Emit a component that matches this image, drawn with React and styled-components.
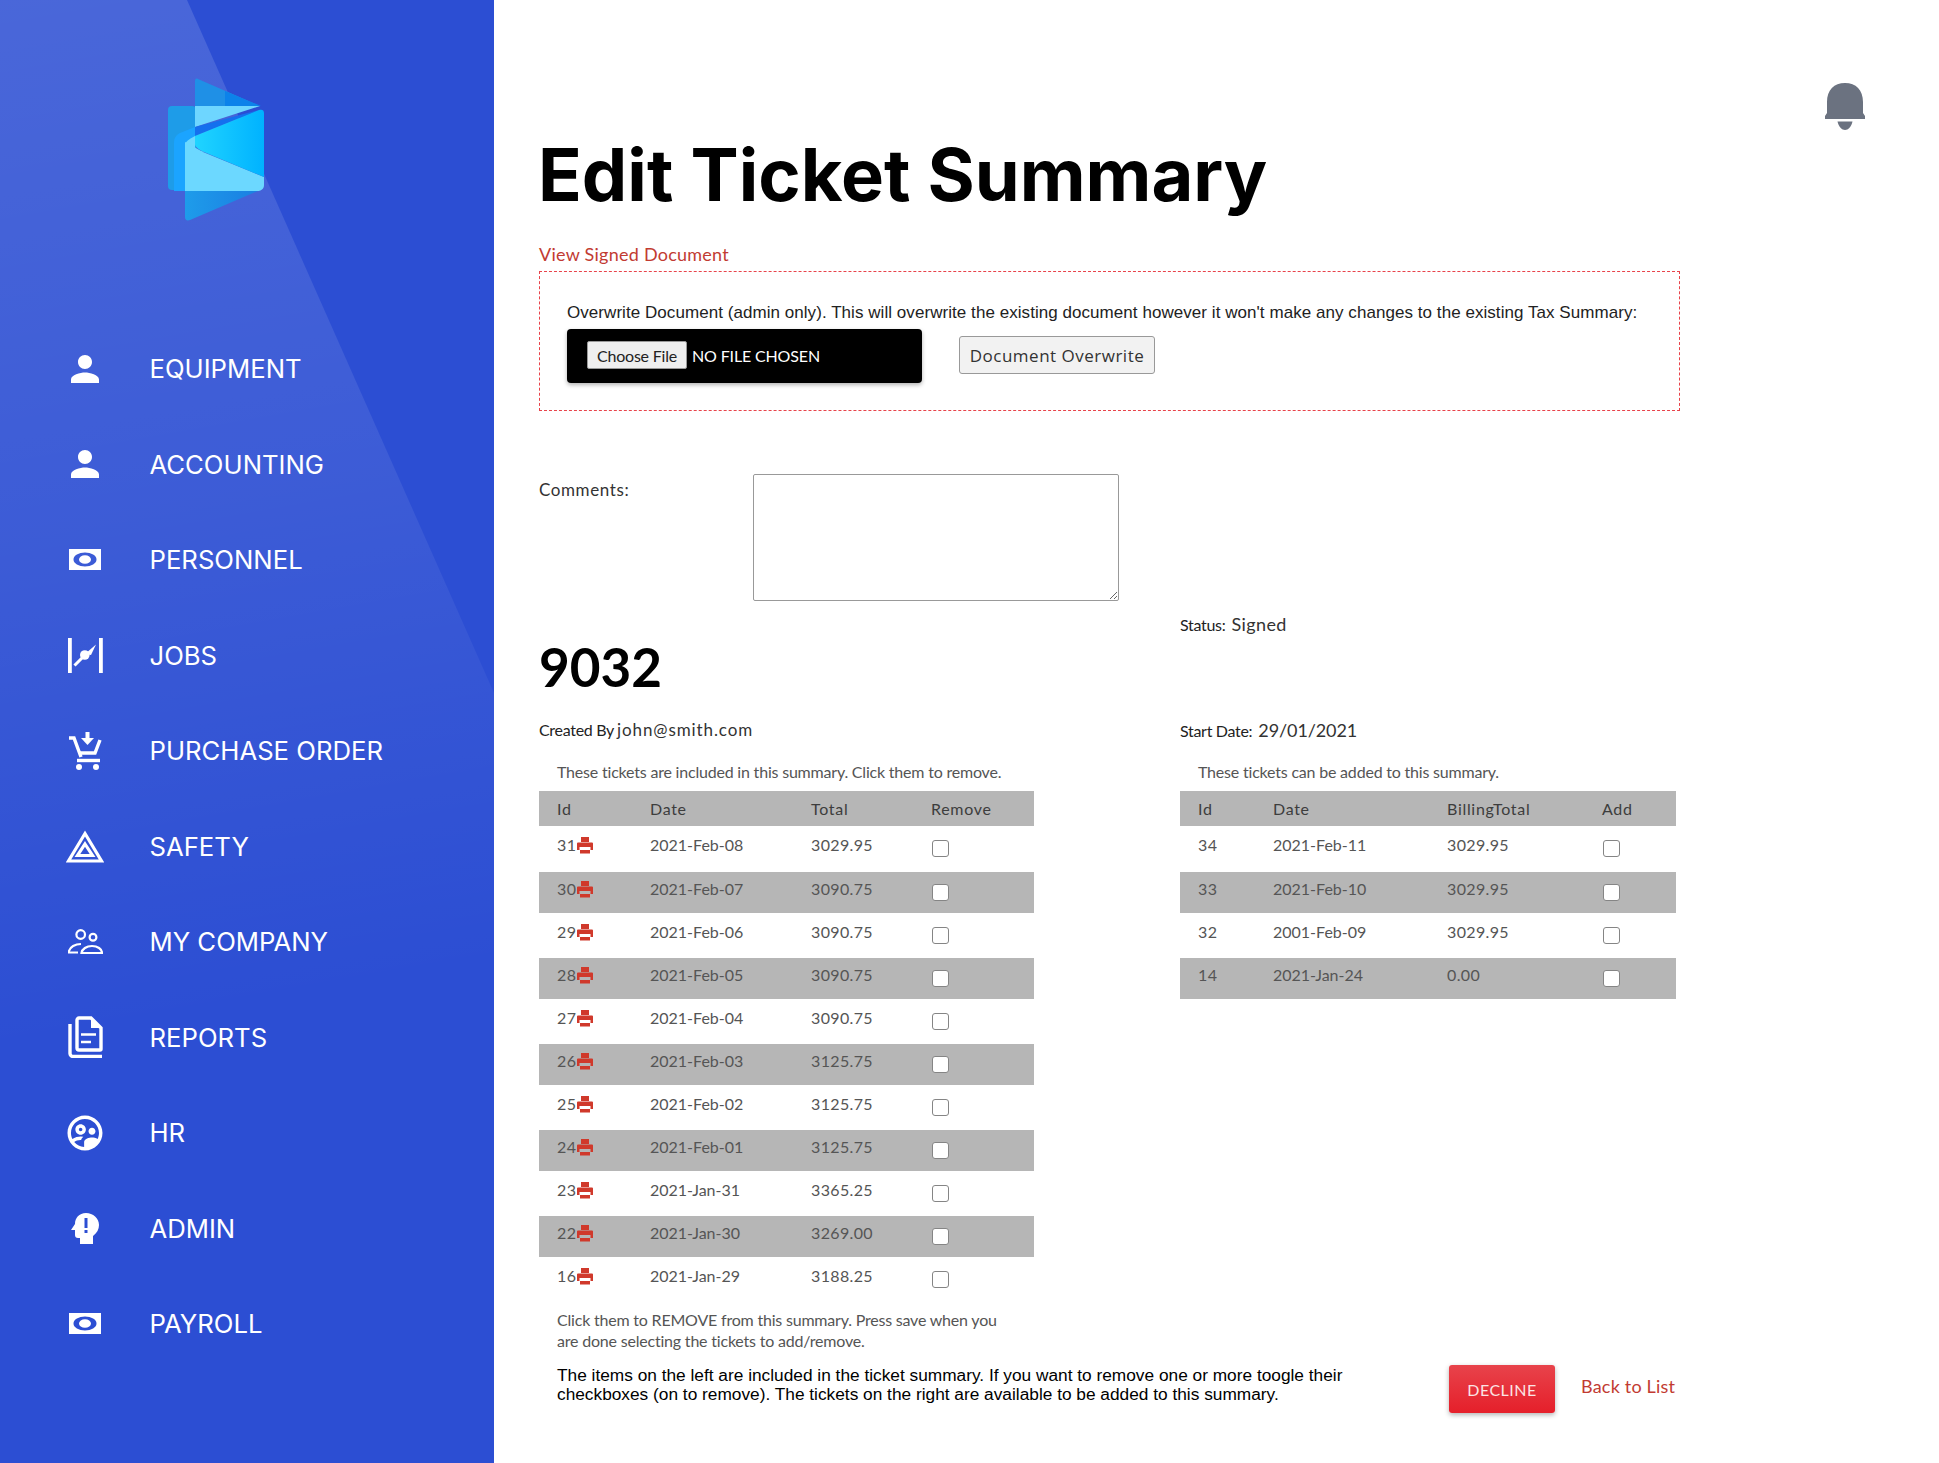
import React from "react";
import styled, { createGlobalStyle } from "styled-components";
import { MdPerson, MdOutlineSupervisedUserCircle } from "react-icons/md";

const MoneyIcon = () => (
  <svg width="32" height="21" viewBox="0 0 32 21" fill="currentColor">
    <path
      fillRule="evenodd"
      d="M0 0h32v21H0z M4.500 10.500a11.500 7 0 1 0 23 0a11.500 7 0 1 0-23 0z M10 10.500a6 4.300 0 1 0 12 0a6 4.300 0 1 0-12 0z"
    />
  </svg>
);

const JobsIcon = () => (
  <svg width="35" height="35" viewBox="0 0 35 35" fill="currentColor">
    <rect x="0" y="0" width="3.800" height="35" />
    <rect x="31" y="0" width="3.800" height="35" />
    <path d="M6.500 27.500L16 18" stroke="currentColor" strokeWidth="3" />
    <path d="M17 16L28 6.500 23 17z" />
    <circle cx="16.800" cy="17" r="4.800" />
  </svg>
);

const CartIcon = () => (
  <svg width="34" height="38" viewBox="0 0 34 38" fill="none" stroke="currentColor" strokeWidth="3.400">
    <path d="M1 6h5l7 19" />
    <path d="M32 8l-5 13H11" />
    <path d="M9 28.500h23" />
    <path d="M19.500 0v6" strokeWidth="4" />
    <path d="M13 6h13l-6.500 7z" fill="currentColor" stroke="none" />
    <circle cx="11" cy="35" r="3" fill="currentColor" stroke="none" />
    <circle cx="28" cy="35" r="3" fill="currentColor" stroke="none" />
  </svg>
);

const SafetyIcon = () => (
  <svg width="38" height="33" viewBox="0 0 38 33" fill="none" stroke="currentColor" strokeWidth="3.200">
    <path d="M19 3.500L35.500 31h-33z" />
    <path d="M19 14l7.500 11.500h-15z" />
  </svg>
);

const PeopleIcon = () => (
  <svg width="35" height="25" viewBox="0 0 35 25" fill="none" stroke="currentColor" strokeWidth="2.200">
    <circle cx="12.700" cy="5.500" r="4.300" />
    <circle cx="25" cy="8.300" r="3.400" />
    <path d="M13 15c-6 0-11 3-12 7v1.500h9" />
    <path d="M13.500 24c.5-4 5-7 10.500-7s10 3 10 7z" />
  </svg>
);

const ReportsIcon = () => (
  <svg width="35" height="42" viewBox="0 0 35 42" fill="none" stroke="currentColor" strokeWidth="3.400">
    <path d="M2 8v29.500a3 3 0 0 0 3 3h29" />
    <path d="M11 2h12l10 10v21a1 1 0 0 1-1 1H11a2 2 0 0 1-2-2V4a2 2 0 0 1 2-2z" />
    <path d="M23 2l10 10H23z" fill="currentColor" stroke="none" />
    <path d="M13 18.500h15M13 26h10" strokeWidth="2.500" />
  </svg>
);

const AdminIcon = () => (
  <svg width="28" height="31" viewBox="0 0 28 31" fill="currentColor">
    <path
      fillRule="evenodd"
      d="M15 0C8 0 4 5 4 11L0 17h4v5a3 3 0 0 0 3 3h2v6h13v-8c4-3 6-7 6-11C28 5 22 0 15 0z M13.500 5h3v10h-3z M13.500 17h3v3h-3z"
    />
  </svg>
);

const BellIcon = () => (
  <svg width="40" height="47" viewBox="0 0 40 47" fill="#6b7280">
    <path d="M20 0C9 0 2 7 2 19v11l-2 3v3h40v-3l-2-3V19C38 7 31 0 20 0z" />
    <path d="M12.500 38.500h15c-1 5-4.500 8.500-7.500 8.500s-6.500-3.500-7.500-8.500z" />
  </svg>
);

const PrintIcon = () => (
  <svg width="16" height="17" viewBox="0 0 16 17" fill="#d0392b">
    <rect x="4" y="0" width="8" height="5" />
    <path
      fillRule="evenodd"
      d="M0 6.500a1 1 0 0 1 1-1h14a1 1 0 0 1 1 1V13h-2.500v-3h-11v3H0z"
    />
    <rect x="3" y="13" width="10" height="3.500" />
  </svg>
);

const LogoMark = () => (
  <svg width="100" height="146" viewBox="168 78 100 146">
    <defs>
      <linearGradient id="flap" x1="0" y1="0" x2="1" y2="0">
        <stop offset="0" stopColor="#1e9cea" />
        <stop offset="1" stopColor="#1a7fe2" />
      </linearGradient>
      <linearGradient id="pane" x1="0" y1="0" x2="1" y2="0">
        <stop offset="0" stopColor="#20d4ff" />
        <stop offset="1" stopColor="#00b2ff" />
      </linearGradient>
    </defs>
    <path d="M197 82c0-2 1-3 3-2l62 27H197z" fill="#1f90e6" />
    <path d="M227 92l36 15h-36z" fill="#0c82ea" />
    <rect x="170" y="107" width="28" height="84" rx="4" fill="#1e9ce8" />
    <path d="M176 192v-48c0-5 2-8 6-10l15-6v64z" fill="#1ba4ff" />
    <path d="M197 107h65l-65 21z" fill="#6ed6ff" />
    <path d="M197 128l64-17-64 26z" fill="#1470ee" />
    <path d="M187 192h72c4 0 7-2 7-6v-8l-61-25-18-10z" fill="#6cd8ff" />
    <path d="M197 137l64-26c3-1 5 0 5 3v64l-60-25c-6-3-9-5-9-8z" fill="url(#pane)" />
    <path d="M187 146c0-3 4-6 10-9v11c0 2 3 4 9 5l-19 0z" fill="#6cd8ff" />
    <path d="M187 192h73l-68 29c-3 1-5 0-5-3z" fill="url(#flap)" />
  </svg>
);

const navItems = [
  { label: "EQUIPMENT", icon: <MdPerson size={42} /> },
  { label: "ACCOUNTING", icon: <MdPerson size={42} /> },
  { label: "PERSONNEL", icon: <MoneyIcon /> },
  { label: "JOBS", icon: <JobsIcon /> },
  { label: "PURCHASE ORDER", icon: <CartIcon /> },
  { label: "SAFETY", icon: <SafetyIcon /> },
  { label: "MY COMPANY", icon: <PeopleIcon /> },
  { label: "REPORTS", icon: <ReportsIcon /> },
  { label: "HR", icon: <MdOutlineSupervisedUserCircle size={42} /> },
  { label: "ADMIN", icon: <AdminIcon /> },
  { label: "PAYROLL", icon: <MoneyIcon /> },
];

const includedTickets = [
  ["31", "2021-Feb-08", "3029.95"],
  ["30", "2021-Feb-07", "3090.75"],
  ["29", "2021-Feb-06", "3090.75"],
  ["28", "2021-Feb-05", "3090.75"],
  ["27", "2021-Feb-04", "3090.75"],
  ["26", "2021-Feb-03", "3125.75"],
  ["25", "2021-Feb-02", "3125.75"],
  ["24", "2021-Feb-01", "3125.75"],
  ["23", "2021-Jan-31", "3365.25"],
  ["22", "2021-Jan-30", "3269.00"],
  ["16", "2021-Jan-29", "3188.25"],
];

const availableTickets = [
  ["34", "2021-Feb-11", "3029.95"],
  ["33", "2021-Feb-10", "3029.95"],
  ["32", "2001-Feb-09", "3029.95"],
  ["14", "2021-Jan-24", "0.00"],
];

function TicketTable({ headers, rows, widths, printable }) {
  return (
    <Table>
      <colgroup>
        {widths.map((w, i) => (
          <col key={i} width={w} />
        ))}
      </colgroup>
      <thead>
        <HeadRow>
          {headers.map((h) => (
            <HeadCell key={h}>{h}</HeadCell>
          ))}
        </HeadRow>
      </thead>
      <tbody>
        {rows.map((row, i) => (
          <Row key={row[0]} $striped={i % 2 === 1}>
            <Cell $striped={i % 2 === 1}>
              <IdWrap>
                {row[0]}
                {printable && <PrintIcon />}
              </IdWrap>
            </Cell>
            <DateCell $striped={i % 2 === 1}>{row[1]}</DateCell>
            <Cell $striped={i % 2 === 1}>{row[2]}</Cell>
            <CheckCell $striped={i % 2 === 1}>
              <Check type="checkbox" />
            </CheckCell>
          </Row>
        ))}
      </tbody>
    </Table>
  );
}

export default function App() {
  return (
    <Page>
      <GlobalStyle />
      <Sidebar>
        <LogoWrap>
          <LogoMark />
        </LogoWrap>
        <Nav>
          {navItems.map((item) => (
            <NavItem key={item.label}>
              <NavIcon>{item.icon}</NavIcon>
              {item.label}
            </NavItem>
          ))}
        </Nav>
      </Sidebar>
      <Main>
        <TopBar>
          <BellIcon />
        </TopBar>
        <Title>Edit Ticket Summary</Title>
        <SignedLink>View Signed Document</SignedLink>
        <OverwriteBox>
          <OverwriteText>
            Overwrite Document (admin only). This will overwrite the existing document however it won't make any changes to the existing Tax Summary:
          </OverwriteText>
          <OverwriteRow>
            <FilePicker>
              <ChooseButton>Choose File</ChooseButton>
              <NoFile>No file chosen</NoFile>
            </FilePicker>
            <OverwriteButton>Document Overwrite</OverwriteButton>
          </OverwriteRow>
        </OverwriteBox>
        <CommentsRow>
          <CommentsLabel>Comments:</CommentsLabel>
          <Comments />
        </CommentsRow>
        <Columns>
          <div>
            <TicketNumber>9032</TicketNumber>
            <Meta>
              <MetaLabel>Created By</MetaLabel>
              <MetaValue>john@smith.com</MetaValue>
            </Meta>
            <Note>These tickets are included in this summary. Click them to remove.</Note>
            <TicketTable
              headers={["Id", "Date", "Total", "Remove"]}
              rows={includedTickets}
              widths={[111, 161, 120, 103]}
              printable
            />
            <FootNote>
              Click them to REMOVE from this summary. Press save when you
              <br />
              are done selecting the tickets to add/remove.
            </FootNote>
          </div>
          <div>
            <StatusLine>
              <MetaLabel>Status:</MetaLabel>
              <StatusValue>Signed</StatusValue>
            </StatusLine>
            <StartLine>
              <MetaLabel>Start Date:</MetaLabel>
              <StartValue>29/01/2021</StartValue>
            </StartLine>
            <Note>These tickets can be added to this summary.</Note>
            <TicketTable
              headers={["Id", "Date", "BillingTotal", "Add"]}
              rows={availableTickets}
              widths={[93, 174, 155, 74]}
            />
          </div>
        </Columns>
        <BottomRow>
          <Help>
            The items on the left are included in the ticket summary. If you want to remove one or more toogle their checkboxes (on to remove). The tickets on the right are available to be added to this summary.
          </Help>
          <DeclineButton>DECLINE</DeclineButton>
          <BackLink>Back to List</BackLink>
        </BottomRow>
      </Main>
    </Page>
  );
}

const GlobalStyle = createGlobalStyle`
  html, body {
    margin: 0;
    padding: 0;
    background: #fff;
  }
  * {
    box-sizing: border-box;
  }
`;

const Page = styled.div`
  display: flex;
  width: 1939px;
  height: 1463px;
  overflow: hidden;
  font-family: "Lato", "Liberation Sans", sans-serif;
`;

const Sidebar = styled.aside`
  position: relative;
  flex: 0 0 494px;
  background: #2c4ed3;
  color: #fff;

  &::before {
    content: "";
    position: absolute;
    inset: 0;
    background: linear-gradient(170deg, rgba(255, 255, 255, 0.14) 0%, rgba(255, 255, 255, 0.08) 35%, rgba(255, 255, 255, 0) 68%);
    clip-path: polygon(0 0, 187px 0, 494px 693px, 494px 100%, 0 100%);
  }
`;

const LogoWrap = styled.div`
  position: relative;
  height: 321px;
  padding: 77px 0 0 166px;
`;

const Nav = styled.nav`
  position: relative;
  display: flex;
  flex-direction: column;
`;

const NavItem = styled.a`
  display: flex;
  align-items: center;
  height: 95.5px;
  padding-left: 64px;
  font-family: "Inter", sans-serif;
  font-size: 25.7px;
  font-weight: 400;
`;

const NavIcon = styled.span`
  display: flex;
  justify-content: center;
  align-items: center;
  width: 42px;
  margin-right: 43.5px;
`;

const Main = styled.main`
  flex: 1;
  padding: 83px 0 0 45px;
`;

const TopBar = styled.div`
  display: flex;
  justify-content: flex-end;
  height: 47px;
  padding-right: 74px;
`;

const Title = styled.h1`
  margin: 5px 0 0 -1px;
  font-family: "Inter", sans-serif;
  font-size: 72.2px;
  line-height: 80px;
  font-weight: 700;
  color: #000;
`;

const SignedLink = styled.a`
  display: block;
  margin-top: 27px;
  font-size: 18px;
  line-height: 24px;
  letter-spacing: 0.25px;
  color: #c23b32;
`;

const OverwriteBox = styled.section`
  width: 1141px;
  height: 140px;
  margin-top: 5px;
  padding: 31px 0 0 27px;
  border: 1.5px dashed #e8434a;
`;

const OverwriteText = styled.p`
  margin: 0;
  font-family: "Liberation Sans", sans-serif;
  font-size: 17px;
  line-height: 20px;
  letter-spacing: 0.055px;
  color: #222;
  white-space: nowrap;
`;

const OverwriteRow = styled.div`
  display: flex;
  align-items: center;
  gap: 37px;
  margin-top: 6px;
`;

const FilePicker = styled.div`
  display: flex;
  align-items: center;
  width: 355px;
  height: 54px;
  padding: 0 0 2px 20px;
  background: #000;
  border-radius: 4px;
  box-shadow: 0 2px 4px rgba(0, 0, 0, 0.3);
`;

const ChooseButton = styled.button`
  width: 100px;
  height: 28px;
  padding: 0;
  background: #efefef;
  border: 1px solid #999;
  border-radius: 2px;
  font-family: "Lato", sans-serif;
  font-size: 16px;
  letter-spacing: -0.2px;
  color: #222;
`;

const NoFile = styled.span`
  margin-left: 5px;
  font-size: 16px;
  letter-spacing: -0.15px;
  color: #fff;
  text-transform: uppercase;
`;

const OverwriteButton = styled.button`
  width: 196px;
  height: 38px;
  margin-top: -2px;
  padding: 0;
  background: #f2f2f2;
  border: 1.5px solid #999;
  border-radius: 3px;
  font-family: "Open Sans", sans-serif;
  font-size: 17px;
  letter-spacing: 0.5px;
  color: #333;
`;

const CommentsRow = styled.div`
  display: flex;
  margin-top: 63px;
`;

const CommentsLabel = styled.label`
  width: 214px;
  padding-top: 4px;
  font-size: 17px;
  line-height: 24px;
  letter-spacing: 0.6px;
  color: #333;
`;

const Comments = styled.textarea`
  width: 366px;
  height: 127px;
  background: #fff;
  border: 1.5px solid #999;
  border-radius: 2px;
`;

const Columns = styled.div`
  display: grid;
  grid-template-columns: 495px 496px;
  column-gap: 146px;
  margin-top: 11px;
`;

const TicketNumber = styled.h2`
  margin: 25px 0 0;
  font-family: "Lato", sans-serif;
  font-size: 53px;
  line-height: 60px;
  font-weight: 700;
  color: #000;
`;

const Meta = styled.div`
  display: flex;
  align-items: baseline;
  gap: 3px;
  height: 24px;
  margin-top: 21px;
  line-height: 24px;
`;

const MetaLabel = styled.span`
  font-size: 16px;
  letter-spacing: -0.3px;
  color: #222;
`;

const MetaValue = styled.span`
  font-size: 17px;
  letter-spacing: 0.9px;
  color: #333;
`;

const StatusLine = styled.div`
  display: flex;
  align-items: baseline;
  gap: 6px;
  height: 24px;
  line-height: 24px;
`;

const StartLine = styled(StatusLine)`
  margin-top: 82px;
`;

const StatusValue = styled.span`
  font-size: 18px;
  letter-spacing: 0.4px;
  color: #333;
`;

const StartValue = styled(StatusValue)`
  letter-spacing: -0.1px;
`;

const Note = styled.p`
  margin: 18px 0 7px 18px;
  font-size: 16px;
  line-height: 24px;
  letter-spacing: -0.2px;
  color: #555;
`;

const Table = styled.table`
  width: 100%;
  table-layout: fixed;
  border-collapse: collapse;
  font-size: 16px;
  color: #555;
  letter-spacing: 0.35px;
`;

const HeadRow = styled.tr`
  height: 35px;
  background: #b6b6b6;
`;

const HeadCell = styled.th`
  padding: 0;
  text-align: left;
  font-weight: 400;
  letter-spacing: 0.7px;
  color: #3d3d3d;

  &:first-child {
    padding-left: 18px;
  }
`;

const Row = styled.tr`
  height: ${(p) => (p.$striped ? "41px" : "45px")};
  background: ${(p) => (p.$striped ? "#b6b6b6" : "#fff")};

  &:first-child {
    height: 46px;
  }
`;

const Cell = styled.td`
  padding: ${(p) => (p.$striped ? "7px" : "9px")} 0 0;
  vertical-align: top;
  line-height: 20px;

  &:first-child {
    padding-left: 18px;
  }
`;

const DateCell = styled(Cell)`
  letter-spacing: 0;
`;

const CheckCell = styled(Cell)`
  padding: ${(p) => (p.$striped ? "12px" : "14px")} 0 0 1px;
`;

const IdWrap = styled.span`
  display: inline-flex;
  align-items: center;
  gap: 1px;
  height: 20px;
`;

const Check = styled.input`
  appearance: none;
  display: block;
  width: 17px;
  height: 17px;
  margin: 0;
  background: #fff;
  border: 1.5px solid #858585;
  border-radius: 3px;
`;

const FootNote = styled.p`
  margin: 7px 0 0 18px;
  font-size: 16px;
  line-height: 21px;
  letter-spacing: -0.2px;
  color: #555;
  white-space: nowrap;
`;

const BottomRow = styled.div`
  display: flex;
  align-items: flex-start;
  margin-top: 15px;
`;

const Help = styled.p`
  width: 820px;
  margin: 0 0 0 18px;
  font-family: "Liberation Sans", sans-serif;
  font-size: 17.3px;
  line-height: 19px;
  color: #000;
`;

const DeclineButton = styled.button`
  width: 106px;
  height: 48px;
  margin: -1px 0 0 72px;
  padding: 0;
  background: linear-gradient(180deg, #e8434b 0%, #e51f2a 100%);
  border: none;
  border-radius: 3px;
  box-shadow: 0 2px 5px rgba(0, 0, 0, 0.3);
  font-family: "Lato", sans-serif;
  font-size: 16px;
  letter-spacing: 0.5px;
  color: #fbe4e4;
`;

const BackLink = styled.a`
  margin: 8px 0 0 26px;
  font-size: 18px;
  line-height: 24px;
  letter-spacing: 0.2px;
  color: #c23b32;
`;
